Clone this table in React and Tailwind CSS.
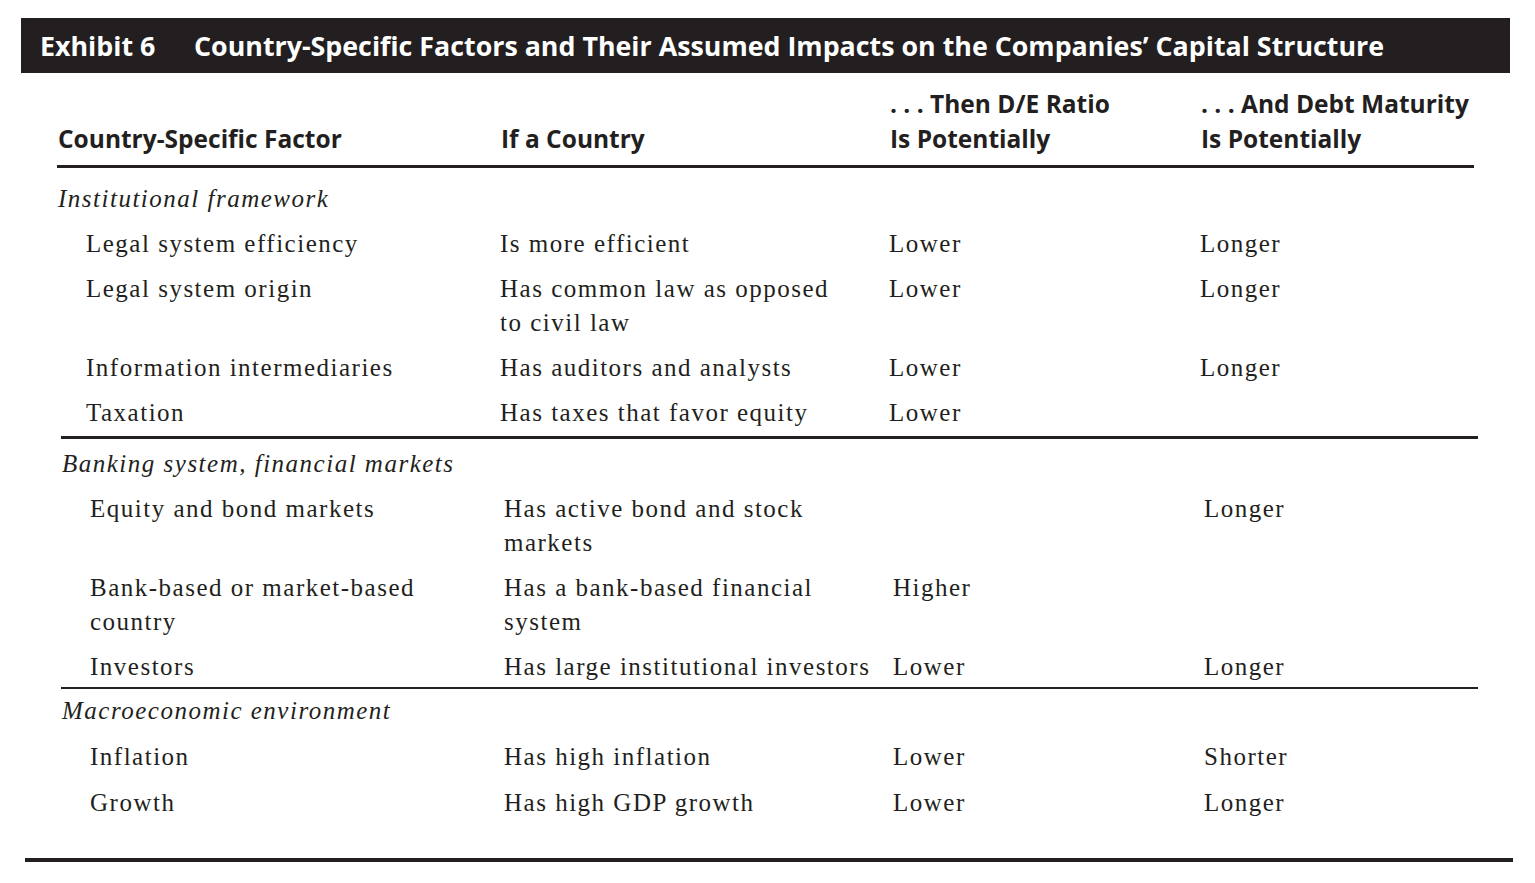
import React from "react";

const sec1 = [
  [["Legal system efficiency"], ["Is more efficient"], "Lower", "Longer"],
  [["Legal system origin"], ["Has common law as opposed", "to civil law"], "Lower", "Longer"],
  [["Information intermediaries"], ["Has auditors and analysts"], "Lower", "Longer"],
  [["Taxation"], ["Has taxes that favor equity"], "Lower", ""],
];
const sec2 = [
  [["Equity and bond markets"], ["Has active bond and stock", "markets"], "", "Longer"],
  [["Bank-based or market-based", "country"], ["Has a bank-based financial", "system"], "Higher", ""],
  [["Investors"], ["Has large institutional investors"], "Lower", "Longer"],
];
const sec3 = [
  [["Inflation"], ["Has high inflation"], "Lower", "Shorter"],
  [["Growth"], ["Has high GDP growth"], "Lower", "Longer"],
];

function Lines({ items }) {
  return items.map((t, i) => (
    <div key={i} className="whitespace-nowrap">
      {t}
    </div>
  ));
}

function Row({ r, pt }) {
  return (
    <div className={`grid grid-cols-[442px_389px_311px_1fr] ${pt}`}>
      <div className="pl-[28px]">
        <Lines items={r[0]} />
      </div>
      <div>
        <Lines items={r[1]} />
      </div>
      <div className="whitespace-nowrap">{r[2]}</div>
      <div className="whitespace-nowrap">{r[3]}</div>
    </div>
  );
}

export default function App() {
  return (
    <div className="w-[1535px] h-[883px] bg-white overflow-hidden pt-[18px] text-[#231f20]">
      <div className="ml-[21px] w-[1489px] h-[55px] bg-[#231f20] flex items-center pl-[19px] pt-[1px] text-white font-['Open_Sans',sans-serif] font-bold text-[26.8px]">
        <span className="w-[154px] shrink-0">Exhibit 6</span>
        <span className="whitespace-nowrap">
          Country-Specific Factors and Their Assumed Impacts on the Companies’ Capital Structure
        </span>
      </div>

      <div className="ml-[57px] w-[1417px] border-b-[3px] border-[#231f20] pt-[13px] pb-[9px] pl-px grid grid-cols-[443px_389px_311px_1fr] items-end font-['Open_Sans',sans-serif] font-bold text-[24.5px] leading-[35px]">
        <div className="whitespace-nowrap">Country-Specific Factor</div>
        <div className="whitespace-nowrap">If a Country</div>
        <div className="whitespace-nowrap">
          <div>. . . Then D/E Ratio</div>
          <div>Is Potentially</div>
        </div>
        <div className="whitespace-nowrap">
          <div>. . . And Debt Maturity</div>
          <div>Is Potentially</div>
        </div>
      </div>

      <div className="font-['Liberation_Serif',serif] text-[25px] leading-[34px] tracking-[0.06em]">
        <div className="ml-[58px] w-[1420px] pt-[14px] pb-[6px]">
          <div className="italic">Institutional framework</div>
          {sec1.map((r, i) => (
            <Row key={i} r={r} pt="pt-[11px]" />
          ))}
        </div>
        <div className="ml-[61px] w-[1417px] h-[3px] bg-[#231f20]" />

        <div className="ml-[62px] w-[1416px] pt-[8px] pb-[3px]">
          <div className="italic">Banking system, financial markets</div>
          {sec2.map((r, i) => (
            <Row key={i} r={r} pt="pt-[11px]" />
          ))}
        </div>
        <div className="ml-[61px] w-[1417px] h-[2px] bg-[#231f20]" />

        <div className="ml-[62px] w-[1416px] pt-[5px]">
          <div className="italic">Macroeconomic environment</div>
          {sec3.map((r, i) => (
            <Row key={i} r={r} pt="pt-[12px]" />
          ))}
        </div>
        <div className="ml-[25px] mt-[38px] w-[1488px] h-[4px] bg-[#231f20]" />
      </div>
    </div>
  );
}
